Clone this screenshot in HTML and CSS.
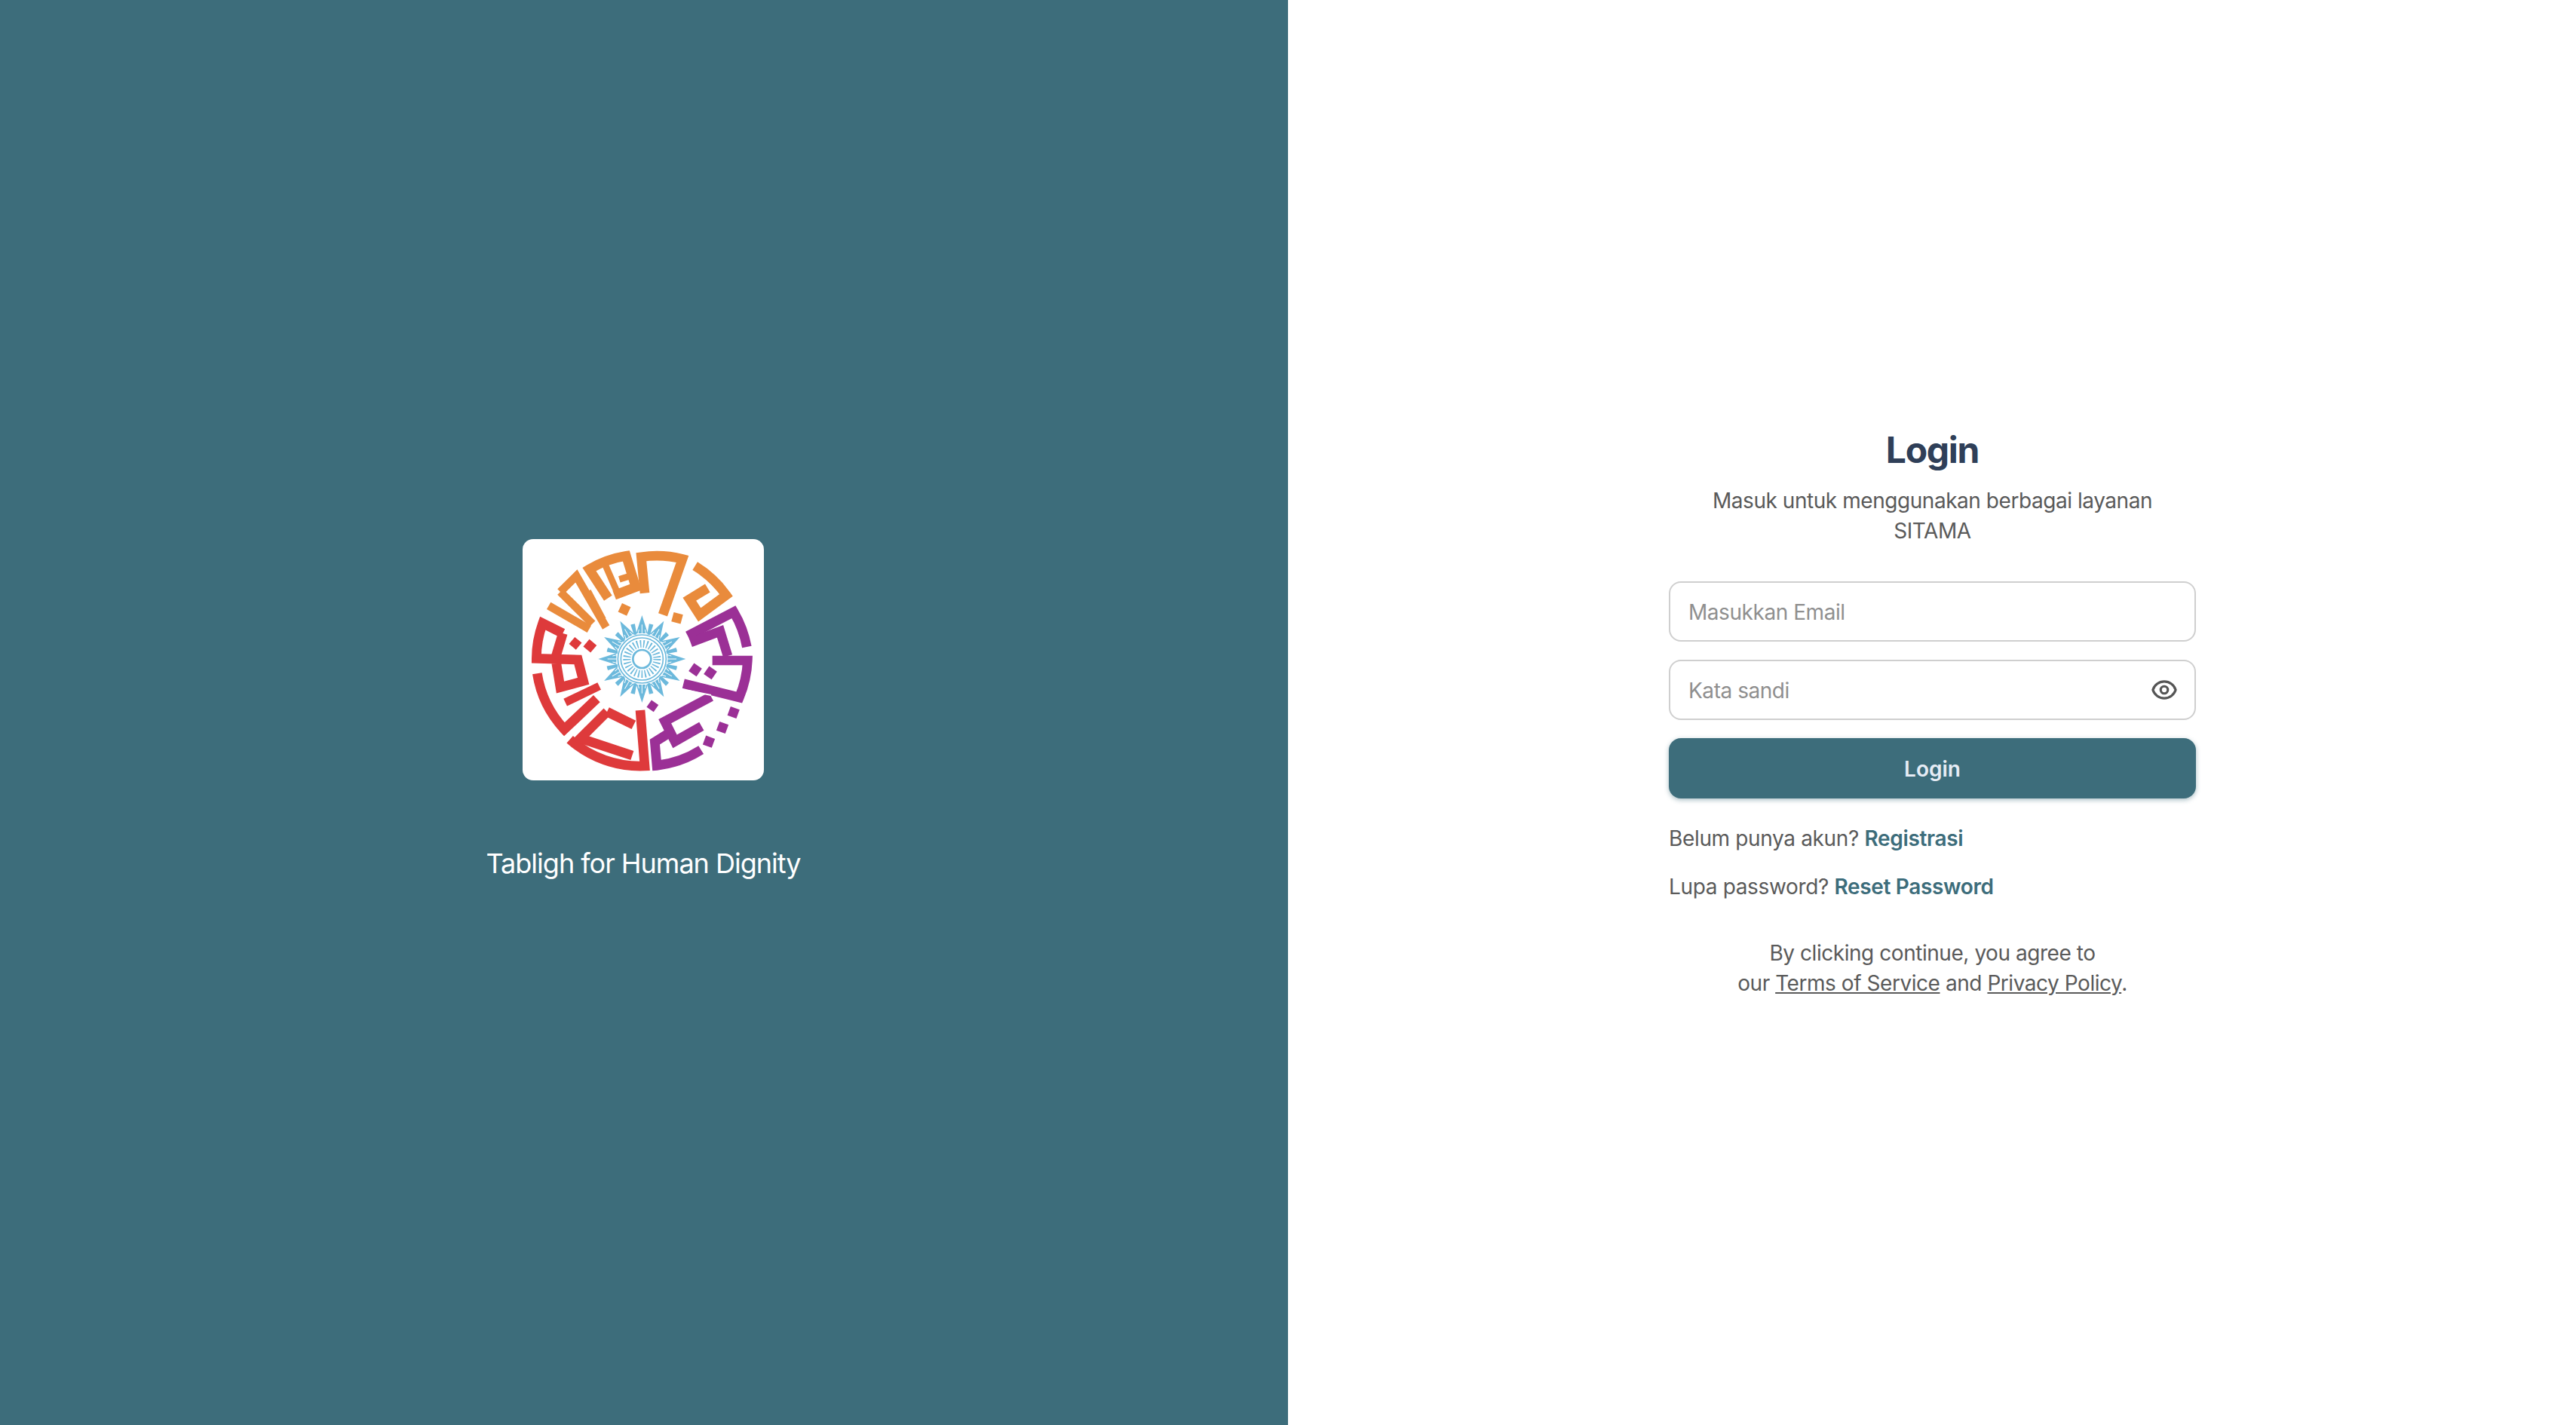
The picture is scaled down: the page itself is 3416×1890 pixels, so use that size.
FILE: index.html
```html
<!DOCTYPE html>
<html lang="id">
<head>
<meta charset="utf-8">
<title>Login</title>
<link rel="stylesheet" href="styles.css">
</head>
<body>
<main class="page">
  <section class="brand">
    <div class="logo">
      <svg class="logo-svg" viewBox="40 45 960 960" xmlns="http://www.w3.org/2000/svg">
        <defs>
          <g id="ray">
            <path class="ray-fill" d="M515 348L538 420H492Z"/>
            <path class="ray-side" d="M488 425L474 385M542 425L556 385"/>
            <path class="ray-cut" d="M515 385V425M503 405L498 425M527 405L532 425"/>
          </g>
        </defs>
        <g class="st orange">
          <path class="thin" d="M144 310L305 403"/>
          <path class="thin" d="M190 255L254 192L372 396"/>
          <path class="thin" d="M190 255L318 382"/>
          <path class="slim" d="M300 252L360 365"/>
          <path d="M380 280L305 165A420 420 0 0 1 452 112L490 236L405 268"/>
          <path class="slim" d="M370 150L420 265"/>
          <path class="slim" d="M425 205L490 185"/>
          <path d="M526 260L512 116A420 420 0 0 1 676 124L598 346"/>
          <path d="M726 152A420 420 0 0 1 850 268L744 346L704 284L776 240"/>
        </g>
        <g class="fill orange-f">
          <rect x="426" y="306" width="38" height="38" transform="rotate(25 445 325)"/>
          <rect x="636" y="340" width="38" height="38" transform="rotate(15 655 359)"/>
        </g>
        <g class="st purple">
          <path d="M697 430L880 335A420 420 0 0 1 932 474"/>
          <path d="M708 456L826 412L856 510"/>
          <path d="M795 528L935 528A420 420 0 0 1 902 675L680 620"/>
          <path d="M790 672L606 770L646 850L752 790"/>
          <path d="M750 884A420 420 0 0 1 574 946L566 852L640 806"/>
        </g>
        <path class="slit" d="M700 648L790 666"/>
        <g class="fill purple-f">
          <rect x="708" y="546" width="38" height="38" transform="rotate(35 727 565)"/>
          <rect x="768" y="558" width="38" height="38" transform="rotate(35 787 577)"/>
          <rect x="540" y="692" width="34" height="34" transform="rotate(35 557 709)"/>
          <rect x="860" y="716" width="38" height="38" transform="rotate(20 879 735)"/>
          <rect x="816" y="776" width="38" height="38" transform="rotate(20 835 795)"/>
          <rect x="762" y="832" width="38" height="38" transform="rotate(20 781 851)"/>
        </g>
        <g class="st red">
          <path d="M200 420L120 380A420 420 0 0 0 95 520L260 525L282 610L190 635L172 525"/>
          <path d="M200 420L170 520"/>
          <path class="thin" d="M210 695L345 630"/>
          <path d="M98 580A420 420 0 0 0 206 802L335 680"/>
          <path d="M228 842A420 420 0 0 0 526 948L508 726"/>
          <path d="M376 732L270 838L476 906"/>
          <path d="M376 732L482 784"/>
        </g>
        <g class="fill red-f">
          <rect x="232" y="442" width="36" height="36" transform="rotate(40 250 460)"/>
          <rect x="289" y="451" width="38" height="38" transform="rotate(40 308 470)"/>
        </g>
        <g class="star">
          <use href="#ray"/>
          <use href="#ray" transform="rotate(30 515 522)"/>
          <use href="#ray" transform="rotate(60 515 522)"/>
          <use href="#ray" transform="rotate(90 515 522)"/>
          <use href="#ray" transform="rotate(120 515 522)"/>
          <use href="#ray" transform="rotate(150 515 522)"/>
          <use href="#ray" transform="rotate(180 515 522)"/>
          <use href="#ray" transform="rotate(210 515 522)"/>
          <use href="#ray" transform="rotate(240 515 522)"/>
          <use href="#ray" transform="rotate(270 515 522)"/>
          <use href="#ray" transform="rotate(300 515 522)"/>
          <use href="#ray" transform="rotate(330 515 522)"/>
          <circle class="disc" cx="515" cy="522" r="100"/>
          <circle class="ring" cx="515" cy="522" r="96"/>
          <circle class="ring" cx="515" cy="522" r="84"/>
          <circle class="ring dash" cx="515" cy="522" r="60"/>
          <circle class="ring thick" cx="515" cy="522" r="36"/>
        </g>
      </svg>
    </div>
    <p class="tagline">Tabligh for Human Dignity</p>
  </section>
  <section class="panel">
    <div class="form-wrap">
      <h1 class="title">Login</h1>
      <p class="subtitle">Masuk untuk menggunakan berbagai layanan SITAMA</p>
      <form class="form">
        <input class="input" type="email" placeholder="Masukkan Email">
        <div class="password">
          <input class="input" type="password" placeholder="Kata sandi">
          <svg class="eye" viewBox="0 0 24 24" xmlns="http://www.w3.org/2000/svg">
            <path d="M15 12a3 3 0 11-6 0 3 3 0 016 0z"/>
            <path d="M2.458 12C3.732 7.943 7.523 5 12 5c4.478 0 8.268 2.943 9.542 7-1.274 4.057-5.064 7-9.542 7-4.477 0-8.268-2.943-9.542-7z"/>
          </svg>
        </div>
        <button class="button" type="button">Login</button>
      </form>
      <p class="line first">Belum punya akun? <a class="link" href="#">Registrasi</a></p>
      <p class="line second">Lupa password? <a class="link" href="#">Reset Password</a></p>
      <p class="legal">By clicking continue, you agree to<br>our <a class="legal-link" href="#">Terms of Service</a> and <a class="legal-link" href="#">Privacy Policy</a>.</p>
    </div>
  </section>
</main>
</body>
</html>
```

FILE: styles.css
```css
* { box-sizing: border-box; }
html, body { margin: 0; padding: 0; }
body { font-family: Inter, "Liberation Sans", sans-serif; background: #fff; color: #5a5a5a; }
.page { display: flex; height: 100vh; min-height: 1890px; }
.brand {
  width: 1708px;
  padding-right: 2px;
  background: #3d6d7b;
  display: flex;
  flex-direction: column;
  align-items: center;
  justify-content: center;
  gap: 80px;
}
.logo { width: 320px; height: 320px; flex: none; background: #fff; border-radius: 14px; overflow: hidden; }
.logo-svg { display: block; width: 100%; height: 100%; }
.tagline { margin: 0; font-size: 36px; line-height: 60px; letter-spacing: -1px; color: #fff; }
.st { fill: none; stroke-width: 38; stroke-linejoin: miter; stroke-linecap: butt; }
.st .thin { stroke-width: 32; }
.st .slim { stroke-width: 26; }
.slit { fill: none; stroke: #fff; stroke-width: 6; }
.orange { stroke: #e98b3c; }
.orange-f { fill: #e98b3c; }
.purple { stroke: #9b3096; }
.purple-f { fill: #9b3096; }
.red { stroke: #de3a3b; }
.red-f { fill: #de3a3b; }
.ray-fill { fill: #6cb9dc; }
.ray-side { fill: none; stroke: #6cb9dc; stroke-width: 9; }
.ray-cut { fill: none; stroke: #fff; stroke-width: 3; }
.disc { fill: #fff; }
.ring { fill: none; stroke: #6cb9dc; stroke-width: 5; }
.dash { stroke-width: 30; stroke-dasharray: 5 8; }
.thick { stroke-width: 8; }
.panel { flex: 1; padding-left: 1px; display: flex; align-items: center; justify-content: center; }
.form-wrap { width: 699px; display: flex; flex-direction: column; }
.title { margin: 0; font-size: 48px; line-height: 60px; font-weight: 700; letter-spacing: -1.3px; color: #2f3f58; text-align: center; }
.subtitle { margin: 17px auto 0; max-width: 620px; font-size: 28px; line-height: 40px; letter-spacing: -0.45px; text-align: center; }
.form { margin-top: 47px; display: flex; flex-direction: column; gap: 24px; }
.input {
  display: block;
  width: 100%;
  height: 80px;
  padding: 2px 24px 0;
  border: 2px solid #cfcfcf;
  border-radius: 16px;
  font-family: inherit;
  font-size: 28px;
  letter-spacing: -0.45px;
  color: #5a5a5a;
  background: #fff;
  outline: none;
}
.input::placeholder { color: #8f8f8f; opacity: 1; }
.password { position: relative; }
.eye {
  position: absolute;
  right: 23px;
  top: 21px;
  width: 38px;
  height: 38px;
  fill: none;
  stroke: #555;
  stroke-width: 2;
  stroke-linecap: round;
  stroke-linejoin: round;
}
.button {
  height: 80px;
  padding: 2px 0 0;
  border: 0;
  border-radius: 16px;
  background: #3d6d7b;
  color: #e6ecf5;
  font-family: inherit;
  font-size: 28px;
  font-weight: 600;
  box-shadow: 0 2px 6px rgba(61, 109, 123, 0.45);
}
.line { margin: 0; font-size: 28px; line-height: 40px; letter-spacing: -0.35px; }
.first { margin-top: 33px; }
.second { margin-top: 24px; }
.link { color: #3d6d7b; font-weight: 600; text-decoration: none; }
.legal { margin: 48px 0 0; font-size: 28px; line-height: 40px; letter-spacing: -0.45px; text-align: center; }
.legal-link { color: inherit; text-decoration: underline; }
```
